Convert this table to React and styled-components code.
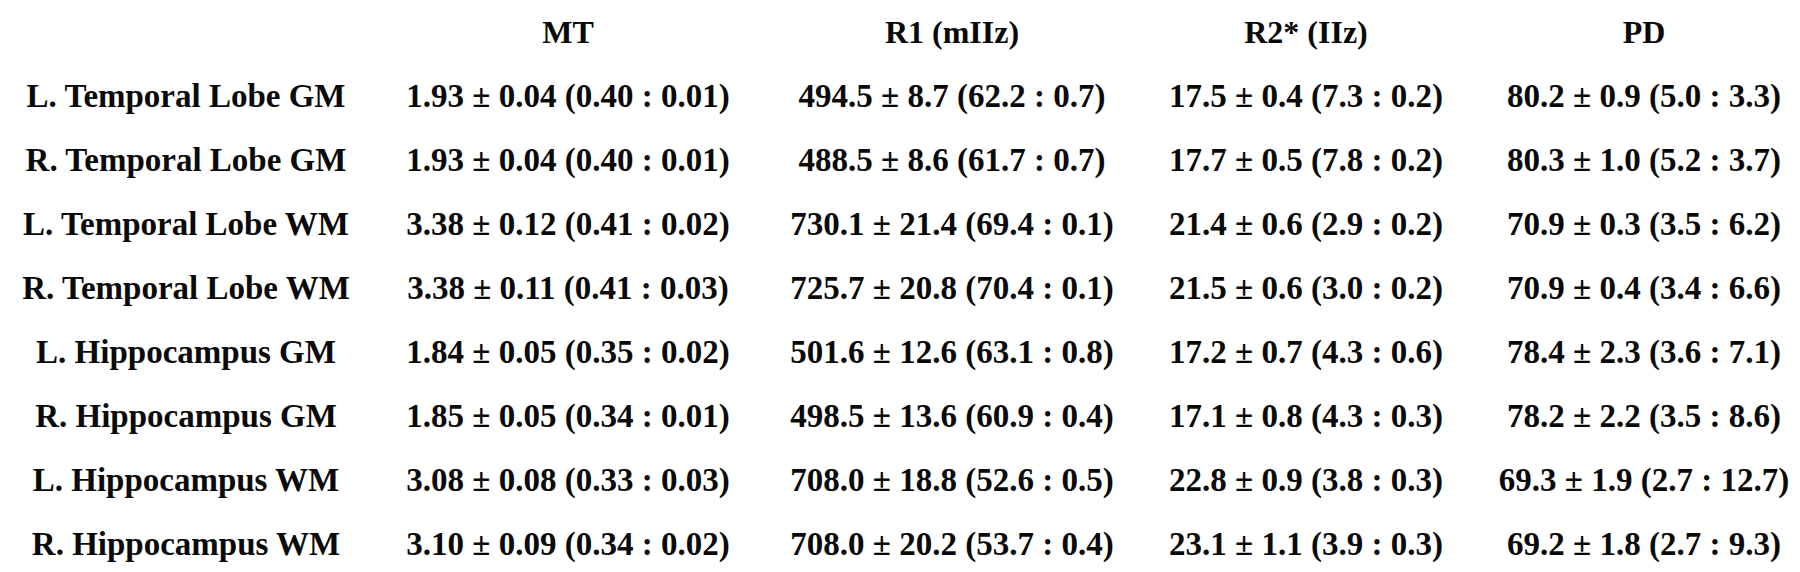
import React from 'react';
import styled, { createGlobalStyle } from 'styled-components';

const COLUMNS = ['MT', 'R1 (mIIz)', 'R2* (IIz)', 'PD'];

const ROWS = [
  { id: 'ltgm', region: 'L. Temporal Lobe GM', values: ['1.93 ± 0.04 (0.40 : 0.01)', '494.5 ± 8.7 (62.2 : 0.7)', '17.5 ± 0.4 (7.3 : 0.2)', '80.2 ± 0.9 (5.0 : 3.3)'] },
  { id: 'rtgm', region: 'R. Temporal Lobe GM', values: ['1.93 ± 0.04 (0.40 : 0.01)', '488.5 ± 8.6 (61.7 : 0.7)', '17.7 ± 0.5 (7.8 : 0.2)', '80.3 ± 1.0 (5.2 : 3.7)'] },
  { id: 'ltwm', region: 'L. Temporal Lobe WM', values: ['3.38 ± 0.12 (0.41 : 0.02)', '730.1 ± 21.4 (69.4 : 0.1)', '21.4 ± 0.6 (2.9 : 0.2)', '70.9 ± 0.3 (3.5 : 6.2)'] },
  { id: 'rtwm', region: 'R. Temporal Lobe WM', values: ['3.38 ± 0.11 (0.41 : 0.03)', '725.7 ± 20.8 (70.4 : 0.1)', '21.5 ± 0.6 (3.0 : 0.2)', '70.9 ± 0.4 (3.4 : 6.6)'] },
  { id: 'lhgm', region: 'L. Hippocampus GM', values: ['1.84 ± 0.05 (0.35 : 0.02)', '501.6 ± 12.6 (63.1 : 0.8)', '17.2 ± 0.7 (4.3 : 0.6)', '78.4 ± 2.3 (3.6 : 7.1)'] },
  { id: 'rhgm', region: 'R. Hippocampus GM', values: ['1.85 ± 0.05 (0.34 : 0.01)', '498.5 ± 13.6 (60.9 : 0.4)', '17.1 ± 0.8 (4.3 : 0.3)', '78.2 ± 2.2 (3.5 : 8.6)'] },
  { id: 'lhwm', region: 'L. Hippocampus WM', values: ['3.08 ± 0.08 (0.33 : 0.03)', '708.0 ± 18.8 (52.6 : 0.5)', '22.8 ± 0.9 (3.8 : 0.3)', '69.3 ± 1.9 (2.7 : 12.7)'] },
  { id: 'rhwm', region: 'R. Hippocampus WM', values: ['3.10 ± 0.09 (0.34 : 0.02)', '708.0 ± 20.2 (53.7 : 0.4)', '23.1 ± 1.1 (3.9 : 0.3)', '69.2 ± 1.8 (2.7 : 9.3)'] },
];

const GlobalStyle = createGlobalStyle`
  html, body {
    margin: 0;
    padding: 0;
    background: #fff;
    overflow: hidden;
  }
`;

const Table = styled.div`
  display: grid;
  grid-template-columns: 372px 392px 376px 332px 344px;
  grid-auto-rows: 64px;
  width: 1816px;
  font-family: "Liberation Serif", "Times New Roman", serif;
  font-weight: bold;
  font-size: 33px;
  color: #0a0a0a;
`;

const Cell = styled.div`
  display: flex;
  align-items: center;
  justify-content: center;
  white-space: nowrap;
  line-height: 1;
`;

const HeadCell = styled(Cell)`
  font-size: 32px;
`;

const App = () => (
  <>
    <GlobalStyle />
    <Table>
      <HeadCell />
      {COLUMNS.map(col => <HeadCell key={col}>{col}</HeadCell>)}
      {ROWS.map(row =>
        <React.Fragment key={row.id}>
          <Cell>{row.region}</Cell>
          {row.values.map((v, i) => <Cell key={i}>{v}</Cell>)}
        </React.Fragment>
      )}
    </Table>
  </>
);

export default App;
